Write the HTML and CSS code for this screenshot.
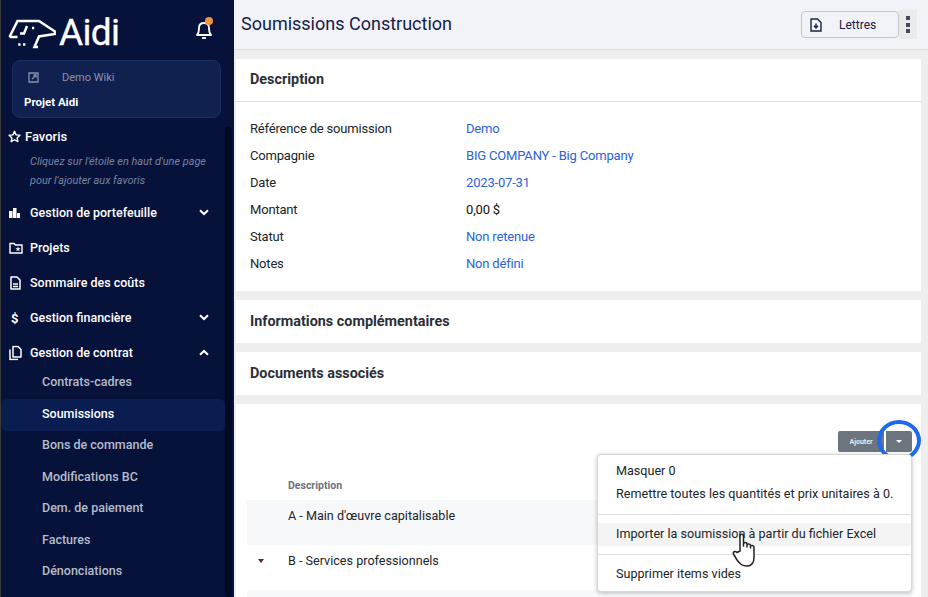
FILE: index.html
```html
<!doctype html>
<html lang="fr">
    <head>
        <meta charset="UTF-8" />
        <title>Soumissions Construction</title>
        <link rel="stylesheet" href="styles.css">
    </head>
    <body>
        <aside class="sidebar">
            <div class="brand">
                <svg class="brand-mark" width="48" height="30" viewBox="0 0 48 30" fill="none" stroke="#fff" stroke-width="2.5">
                    <path d="M1.5 18 L9.5 2 H31 L47 12.5 V15 L31 17.5 L26.5 28 H30 M1.5 18 H9.5" stroke-linejoin="miter" />
                    <path d="M19 7 L16 14.5 H12 M24 9 H26.2 M10.2 25.5 H12.6 M15 25.5 H17.4" />
                </svg>
                <span class="brand-name">Aidi</span>
                <div class="bell">
                    <svg width="16" height="20" viewBox="0 0 16 20" fill="none" stroke="#fff" stroke-width="1.8">
                        <path d="M1 15 C3 13 3 11 3 8 C3 5 5 3 8 3 C11 3 13 5 13 8 C13 11 13 13 15 15 Z" stroke-linejoin="round" />
                        <path d="M6 18 H10" />
                    </svg>
                    <span class="bell-dot"></span>
                </div>
            </div>
            <div class="project-box">
                <div class="wiki-link">
                    <svg width="11" height="11" viewBox="0 0 11 11" fill="none" stroke="#8a93ab" stroke-width="1.3">
                        <path d="M1 1 H10 V10 H1 Z M4 7 L8 3 M5.5 3 H8 V5.5" />
                    </svg>
                    <span>Demo Wiki</span>
                </div>
                <div class="project-name">Projet Aidi</div>
            </div>
            <div class="scrollbar"></div>
            <nav class="nav">
                <div class="fav">
                    <svg width="13" height="13" viewBox="0 0 24 24" fill="none" stroke="#fff" stroke-width="2.6">
                        <path d="M12 2.5 L15 9 L22 9.8 L16.8 14.6 L18.2 21.5 L12 18 L5.8 21.5 L7.2 14.6 L2 9.8 L9 9 Z" stroke-linejoin="round" />
                    </svg>
                    <span>Favoris</span>
                </div>
                <p class="fav-note">Cliquez sur l'étoile en haut d'une page pour l'ajouter aux favoris</p>
                <a class="nav-item">
                    <svg class="nav-icon" width="11" height="10" viewBox="0 0 11 10" fill="#fff">
                        <path d="M0 3 H3.5 V10 H0 Z M4 0 H7.5 V10 H4 Z M8 5 H11 V10 H8 Z" />
                    </svg>
                    <span>Gestion de portefeuille</span>
                    <svg class="chev" width="10" height="7" viewBox="0 0 10 7" fill="none" stroke="#fff" stroke-width="2"><path d="M1 1.2 L5 5 L9 1.2" /></svg>
                </a>
                <a class="nav-item">
                    <svg class="nav-icon" width="14" height="12" viewBox="0 0 14 12" fill="none" stroke="#fff" stroke-width="1.4">
                        <path d="M1 1.5 H5 L6.5 3 H13 V11 H1 Z" />
                        <path d="M9 4.5 L9.7 6.2 H11.5 L10.1 7.4 L10.6 9.2 L9 8.2 L7.4 9.2 L7.9 7.4 L6.5 6.2 H8.3 Z" fill="#fff" stroke="none" />
                    </svg>
                    <span>Projets</span>
                </a>
                <a class="nav-item">
                    <svg class="nav-icon doc" width="11" height="14" viewBox="0 0 11 14" fill="none" stroke="#fff" stroke-width="1.5">
                        <path d="M1 1 H7 L10 4 V13 H1 Z" stroke-linejoin="round" />
                        <path d="M3 8 H8 M3 10.5 H8" />
                    </svg>
                    <span>Sommaire des coûts</span>
                </a>
                <a class="nav-item">
                    <span class="nav-icon dollar">$</span>
                    <span>Gestion financière</span>
                    <svg class="chev" width="10" height="7" viewBox="0 0 10 7" fill="none" stroke="#fff" stroke-width="2"><path d="M1 1.2 L5 5 L9 1.2" /></svg>
                </a>
                <a class="nav-item">
                    <svg class="nav-icon" width="13" height="15" viewBox="0 0 13 15" fill="none" stroke="#fff" stroke-width="1.5">
                        <path d="M4 1 H9 L12 4 V11.5 H4 Z" stroke-linejoin="round" />
                        <path d="M1 4 V14 H9" />
                    </svg>
                    <span>Gestion de contrat</span>
                    <svg class="chev" width="10" height="7" viewBox="0 0 10 7" fill="none" stroke="#fff" stroke-width="2"><path d="M1 5.8 L5 2 L9 5.8" /></svg>
                </a>
                <div class="sub-nav">
                    <a class="sub-item">Contrats-cadres</a>
                    <a class="sub-item active">Soumissions</a>
                    <a class="sub-item">Bons de commande</a>
                    <a class="sub-item">Modifications BC</a>
                    <a class="sub-item">Dem. de paiement</a>
                    <a class="sub-item">Factures</a>
                    <a class="sub-item">Dénonciations</a>
                </div>
            </nav>
        </aside>

        <div class="main">
            <header class="topbar">
                <h1>Soumissions Construction</h1>
                <button class="letters-btn">
                    <svg width="12" height="14" viewBox="0 0 12 14" fill="none" stroke="#1a2340" stroke-width="1.4">
                        <path d="M1 1 H7.5 L11 4.5 V13 H1 Z" />
                        <path d="M6 5.5 V9.5 M4 7.8 L6 10 L8 7.8" />
                    </svg>
                    <span>Lettres</span>
                </button>
                <div class="more-btn"><i></i><i></i><i></i></div>
            </header>

            <div class="content">
                <section class="card">
                    <h2 class="card-title with-line">Description</h2>
                    <div class="details">
                        <span>Référence de soumission</span><a>Demo</a>
                        <span>Compagnie</span><a>BIG COMPANY - Big Company</a>
                        <span>Date</span><a>2023-07-31</a>
                        <span>Montant</span><b>0,00 $</b>
                        <span>Statut</span><a>Non retenue</a>
                        <span>Notes</span><a>Non défini</a>
                    </div>
                </section>
                <section class="card">
                    <h2 class="card-title">Informations complémentaires</h2>
                </section>
                <section class="card">
                    <h2 class="card-title">Documents associés</h2>
                </section>
                <section class="card table-card">
                    <div class="actions">
                        <button class="btn-add">Ajouter</button>
                        <button class="btn-toggle"><span class="caret"></span></button>
                    </div>
                    <div class="table-head">Description</div>
                    <div class="row striped"><span>A - Main d'œuvre capitalisable</span></div>
                    <div class="row plain"><span class="row-caret"></span><span>B - Services professionnels</span></div>
                    <div class="row striped"></div>
                </section>
            </div>
        </div>

        <div class="circle"></div>
        <div class="menu">
            <div class="menu-item">Masquer 0</div>
            <div class="menu-item">Remettre toutes les quantités et prix unitaires à 0.</div>
            <hr />
            <div class="menu-item hover">Importer la soumission à partir du fichier Excel</div>
            <hr />
            <div class="menu-item">Supprimer items vides</div>
        </div>
        <svg class="hand" width="26" height="34" viewBox="0 0 26 34" fill="#fff" stroke="#222" stroke-width="1.5" stroke-linejoin="round">
            <path d="M8 18 V3 C8 0.5 11.5 0.5 11.5 3 V13 V11 C11.5 9 15 9 15 11 V14 V12 C15 10.5 18.5 10.5 18.5 12.5 V15 V13.5 C18.5 12 22 12 22 14 V24 C22 29 20 33 15 33 C10 33 8 31 5 27 L1.5 21 C0.5 19 3 17.5 5 19.5 Z" />
        </svg>
    </body>
</html>
```

FILE: styles.css
```css
* {
    box-sizing: border-box;
}

html,
body {
    margin: 0;
    height: 100%;
    overflow: hidden;
}

body {
    display: flex;
    font-family: Roboto, "Liberation Sans", sans-serif;
    font-size: 13px;
    color: #212529;
    background-color: #eeeeee;
}

/* sidebar */
.sidebar {
    position: relative;
    width: 234px;
    flex-shrink: 0;
    height: 597px;
    overflow: hidden;
    background-color: #06123a;
    border-left: 1px solid #3a3a3a;
    color: #fff;
}

.brand {
    height: 60px;
    display: flex;
    align-items: center;
    padding: 6px 0 0 7px;
    position: relative;
}

.brand-mark {
    margin: 2px 3px 0 0;
}

.brand-name {
    font-size: 37px;
    font-weight: 400;
    letter-spacing: -0.7px;
    line-height: 40px;
    -webkit-text-stroke: 0.3px #fff;
}

.bell {
    position: absolute;
    left: 195px;
    top: 20px;
}

.bell-dot {
    position: absolute;
    left: 9px;
    top: -3px;
    width: 8px;
    height: 8px;
    border-radius: 50%;
    background-color: #f5923e;
}

.project-box {
    margin: 0 13px 0 11px;
    height: 58px;
    padding: 10px 11px;
    border-radius: 8px;
    background-color: #10204f;
    border: 1px solid #1b2c5e;
}

.wiki-link {
    display: flex;
    align-items: center;
    gap: 23px;
    padding-left: 4px;
    font-size: 11px;
    color: #8a93ab;
}

.project-name {
    margin-top: 11px;
    font-size: 11.5px;
    font-weight: 700;
}

.scrollbar {
    position: absolute;
    left: 224px;
    top: 127px;
    width: 7px;
    height: 470px;
    border-radius: 4px;
    background-color: #020925;
}

.nav {
    padding-top: 9px;
}

.fav {
    display: flex;
    align-items: center;
    gap: 4px;
    height: 19px;
    padding-left: 7px;
    font-size: 13px;
    font-weight: 500;
}

.fav-note {
    margin: 6px 15px 0 29px;
    font-size: 10.9px;
    line-height: 19px;
    font-style: italic;
    color: #7b84a0;
}

.nav-item {
    display: flex;
    align-items: center;
    height: 35px;
    padding-left: 29px;
    position: relative;
    font-size: 12.5px;
    font-weight: 500;
}

.fav-note + .nav-item {
    margin-top: 5px;
}

.nav-icon {
    position: absolute;
    left: 8px;
    top: 50%;
    transform: translateY(-50%);
}

.nav-icon.doc {
    left: 9px;
}

.dollar {
    left: 10px;
    font-size: 13px;
    font-weight: 700;
}

.chev {
    position: absolute;
    left: 198px;
    top: 14px;
}

.sub-nav {
    display: flex;
    flex-direction: column;
    margin-top: -4px;
}

.sub-item {
    height: 31.5px;
    display: flex;
    align-items: center;
    padding-left: 41px;
    width: 224px;
    font-size: 12.5px;
    font-weight: 500;
    color: #b6bccb;
}

.sub-item.active {
    margin: 1.5px 0 -1.5px;
    padding-bottom: 3px;
    background-color: #0a1d50;
    border-radius: 6px;
    color: #fff;
}

/* main */
.main {
    flex: 1;
    min-width: 0;
}

.topbar {
    height: 50px;
    display: flex;
    align-items: center;
    padding: 0 11px 0 7px;
    background-color: #f1f3f8;
    border-bottom: 1px solid #dcdde3;
}

h1 {
    flex: 1;
    margin: 0 0 2px;
    font-size: 18px;
    font-weight: 400;
    color: #15204a;
}

.letters-btn {
    display: flex;
    align-items: center;
    width: 98px;
    height: 27px;
    padding: 0 0 0 8px;
    gap: 17px;
    font-family: inherit;
    font-size: 12px;
    color: #15204a;
    background-color: #f1f3f8;
    border: 1px solid #c3c6d1;
    border-radius: 4px;
}

.more-btn {
    width: 18px;
    height: 29px;
    display: flex;
    flex-direction: column;
    justify-content: center;
    align-items: center;
    gap: 2.5px;
    background-color: #ebebeb;
}

.more-btn i {
    width: 4px;
    height: 4px;
    background-color: #444b5e;
}

.content {
    display: flex;
    flex-direction: column;
    gap: 9px;
    padding: 9px 7px 0 2px;
}

.card {
    background-color: #fff;
}

.card-title {
    margin: 0;
    height: 43px;
    padding: 0 14px;
    display: flex;
    align-items: center;
    font-size: 14.4px;
    font-weight: 700;
    color: #2b2f38;
}

.with-line {
    padding-bottom: 2px;
    border-bottom: 1px solid #dedede;
}

.details {
    display: grid;
    grid-template-columns: 216px 1fr;
    grid-auto-rows: 27px;
    align-items: center;
    padding: 13px 14px 14px;
    height: 189px;
    letter-spacing: -0.18px;
}

.details a {
    color: #2a62e0;
}

.details b {
    font-weight: 400;
    color: #111;
}

.table-card {
    height: 193px;
    padding: 27px 9px 0 11px;
    overflow: hidden;
}

.actions {
    display: flex;
    justify-content: flex-end;
    gap: 2px;
    height: 21px;
}

.btn-add {
    width: 46px;
    padding: 0;
    font-family: inherit;
    font-size: 7px;
    font-weight: 700;
    color: #e8e9ea;
    background-color: #6c757d;
    border: none;
    border-radius: 2px 0 0 2px;
}

.btn-toggle {
    width: 26px;
    display: flex;
    align-items: center;
    justify-content: center;
    background-color: #6c757d;
    border: none;
    border-radius: 0 2px 2px 0;
}

.caret {
    border-left: 3.5px solid transparent;
    border-right: 3.5px solid transparent;
    border-top: 3.5px solid #fff;
}

.table-head {
    height: 48px;
    padding: 27px 0 0 41px;
    font-size: 10.5px;
    font-weight: 700;
    color: #6d7280;
}

.row {
    display: flex;
    padding-left: 41px;
    position: relative;
    color: #212529;
    font-size: 12.6px;
}

.striped {
    height: 45px;
    padding-top: 8px;
    background-color: #f7f8fa;
}

.plain {
    height: 45px;
    padding-top: 8px;
}

.row-caret {
    position: absolute;
    left: 11px;
    top: 14px;
    border-left: 3.5px solid transparent;
    border-right: 3.5px solid transparent;
    border-top: 4px solid #5b2b2b;
}

/* overlays */
.circle {
    position: absolute;
    left: 877px;
    top: 420px;
    width: 44px;
    height: 41px;
    border: 4px solid #1d6af0;
    border-radius: 50%;
}

.menu {
    position: absolute;
    left: 597px;
    top: 454px;
    width: 315px;
    height: 138px;
    padding: 5px 0;
    background-color: #fff;
    border-radius: 4px;
    border: 1px solid #d8d8d8;
    box-shadow: 0 1px 4px rgba(0, 0, 0, 0.25);
    color: #212529;
}

.menu-item {
    height: 23px;
    padding: 0 18px 2px;
    display: flex;
    align-items: center;
    font-size: 12.6px;
    white-space: nowrap;
}

.menu hr {
    margin: 8px 0;
    border: none;
    border-top: 1px solid #dfdfdf;
}

.menu-item.hover {
    background-color: #f4f4f4;
}

.hand {
    position: absolute;
    left: 732px;
    top: 533px;
}
```
